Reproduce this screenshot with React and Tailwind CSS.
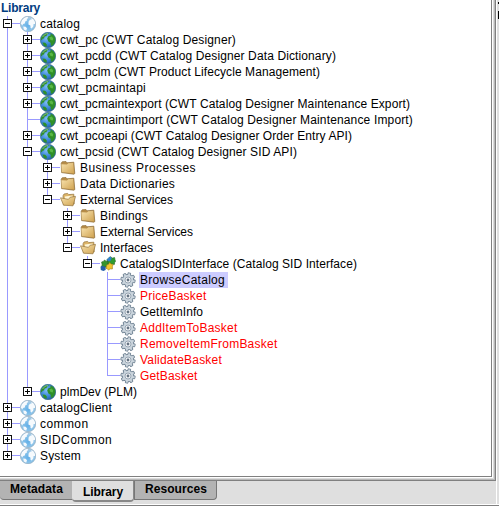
import { useLayoutEffect, useRef } from "react";

// g: one flag for each ancestor column, "1" where its line continues below
const ROWS = [
  { g: "", box: "-", icon: "pale", text: "catalog", w: 40 },
  { g: "1", box: "+", icon: "globe", text: "cwt_pc (CWT Catalog Designer)", w: 176 },
  { g: "1", box: "+", icon: "globe", text: "cwt_pcdd (CWT Catalog Designer Data Dictionary)", w: 276 },
  { g: "1", box: "+", icon: "globe", text: "cwt_pclm (CWT Product Lifecycle Management)", w: 260 },
  { g: "1", box: "+", icon: "globe", text: "cwt_pcmaintapi", w: 86 },
  { g: "1", box: "+", icon: "globe", text: "cwt_pcmaintexport (CWT Catalog Designer Maintenance Export)", w: 350 },
  { g: "1", box: "", icon: "globe", text: "cwt_pcmaintimport (CWT Catalog Designer Maintenance Import)", w: 353 },
  { g: "1", box: "+", icon: "globe", text: "cwt_pcoeapi (CWT Catalog Designer Order Entry API)", w: 292 },
  { g: "1", box: "-", icon: "globe", text: "cwt_pcsid (CWT Catalog Designer SID API)", w: 237 },
  { g: "11", box: "+", icon: "folder", text: "Business Processes", w: 116 },
  { g: "11", box: "+", icon: "folder", text: "Data Dictionaries", w: 95 },
  { g: "11", box: "-", icon: "open", text: "External Services", w: 93, last: true },
  { g: "110", box: "+", icon: "folder", text: "Bindings", w: 48 },
  { g: "110", box: "+", icon: "folder", text: "External Services", w: 93 },
  { g: "110", box: "-", icon: "open", text: "Interfaces", w: 53, last: true },
  { g: "1100", box: "-", icon: "puzzle", text: "CatalogSIDInterface (Catalog SID Interface)", w: 237, last: true },
  { g: "11000", box: "", icon: "gear", text: "BrowseCatalog", w: 85, selected: true },
  { g: "11000", box: "", icon: "gear", text: "PriceBasket", w: 66.5, red: true },
  { g: "11000", box: "", icon: "gear", text: "GetItemInfo", w: 63 },
  { g: "11000", box: "", icon: "gear", text: "AddItemToBasket", w: 97.5, red: true },
  { g: "11000", box: "", icon: "gear", text: "RemoveItemFromBasket", w: 137.5, red: true },
  { g: "11000", box: "", icon: "gear", text: "ValidateBasket", w: 82, red: true },
  { g: "11000", box: "", icon: "gear", text: "GetBasket", w: 57.5, red: true, last: true },
  { g: "1", box: "+", icon: "globe", text: "plmDev (PLM)", w: 77, last: true },
  { g: "", box: "+", icon: "pale", text: "catalogClient", w: 72 },
  { g: "", box: "+", icon: "pale", text: "common", w: 48.5 },
  { g: "", box: "+", icon: "pale", text: "SIDCommon", w: 72 },
  { g: "", box: "+", icon: "pale", text: "System", w: 41, last: true },
];

// Spreads the letters of a label over a given width
function Label({ text, width, className }) {
  const ref = useRef(null);
  useLayoutEffect(() => {
    const el = ref.current;
    el.style.letterSpacing = "0px";
    const natural = el.getBoundingClientRect().width;
    el.style.letterSpacing = `${(width - natural) / text.length}px`;
  }, [text, width]);
  return (
    <span ref={ref} className={className}>
      {text}
    </span>
  );
}

function Guide({ on }) {
  return (
    <div className="h-4 w-5 shrink-0 pl-[7px]">
      {on && <div className="h-4 w-px bg-[#9999ff]" />}
    </div>
  );
}

function Connector({ box, last }) {
  return (
    <svg width="20" height="16" shapeRendering="crispEdges" className="shrink-0">
      <path d={last ? "M7 0h1v8h-1z" : "M7 0h1v16h-1z"} fill="#9999ff" />
      <path d="M7 7h13v1h-13z" fill="#9999ff" />
      {box && (
        <>
          <rect x="3.5" y="3.5" width="8" height="8" fill="#fff" stroke="#111" />
          <path d="M5 7h5v1h-5z" fill="#000" />
          {box === "+" && <path d="M7 5h1v5h-1z" fill="#000" />}
        </>
      )}
    </svg>
  );
}

function Globe({ pale }) {
  return (
    <svg width="16" height="16" viewBox="0 0 16 16" className="shrink-0">
      <circle cx="8" cy="8" r="7.7" fill={pale ? "url(#paleSea)" : "url(#sea)"} stroke={pale ? "#86a3b8" : "#2a5f80"} strokeWidth=".6" />
      {pale ? (
        <g fill="#f6fafd">
          <path d="M.8 7.4 1.8 4.4 4.2 2 7.2.8 8.2 2 6.8 3 7 4.6 5.2 5.6 4.8 7.4 3 8 2.4 9.4z" />
          <path d="M8.6 5.6 10 3.8 11.6 3.4 11.4 2 13.6 3.4 15 6 15 8 13.6 8 13.4 10.2 11.8 12.4 10.6 12 10.4 9.4 8.4 8.6z" />
          <path d="M3.2 10.4 5.6 10.8 7 12.2 6.2 14.8 3.8 13.6z" />
        </g>
      ) : (
        <g fill="#2f8f28">
          <path d="M.8 7.6 1.6 4.6 4 2 7.4.7 9 1.8 7 2.6 6.6 4 4.6 4.4 4 6.4 2.4 6.8 2 8.6z" />
          <path d="M7.2 6.6 8.4 4.2 10.6 3.4 10.4 1.6 13.4 3 15.2 6 15.3 8.6 14.2 11.8 12.2 13.8 10.8 13.4 10.6 10.8 8.4 9.6z" />
          <path d="M2.4 10.6 5.2 10.8 6.8 12.4 6.6 14.8 4 14z" />
          <path d="M9.2 5.4 11.6 4.6 13.2 6.2 12.8 8.4 10.6 8z" fill="#58b844" />
        </g>
      )}
      <path d="M2.6 5C3.8 2.8 6 1.6 8 1.6" stroke="#fff" strokeOpacity=".4" fill="none" />
    </svg>
  );
}

function Folder({ open }) {
  return (
    <svg width="16" height="16" viewBox="0 0 16 16" className="shrink-0">
      {open ? (
        <>
          <path d="M3.4 12.8 3 3.8 4 2 7.6 1.4 8.8 2.6 13.8 2.2 14.2 12z" fill="#dcb468" stroke="#94743e" strokeWidth=".7" />
          <path d="M4.8 4.4 12.6 3.4 12.8 8 5 9z" fill="#fff6d6" />
          <path d="M.5 5.8 8.4 7.4 10.2 5.2 15.5 4.4 13 13.8 3.6 13.2z" fill="url(#fold)" stroke="#94743e" strokeWidth=".7" />
        </>
      ) : (
        <>
          <path d="M1.2 3.2 2.2 1.8 6 1.6 7.2 2.8 13.8 2.2 14.8 13.6 13.8 14.2 1.6 12.6z" fill="#b78d48" stroke="#8c6c37" strokeWidth=".7" />
          <path d="M1.4 4.2 7 4.4 8.2 3.2 13.2 2.9 14 13.4 1.8 12.1z" fill="url(#fold)" />
        </>
      )}
    </svg>
  );
}

function Gear() {
  return (
    <svg width="16" height="16" viewBox="0 0 16 16" className="shrink-0">
      <g fill="#6c7f90">
        {[0, 45, 90, 135].map((a) => (
          <rect key={a} x="6.2" y=".4" width="3.6" height="15.2" rx="1" transform={`rotate(${a + 12} 8 8)`} />
        ))}
      </g>
      <circle cx="8" cy="8" r="5.9" fill="#6c7f90" />
      <g fill="#cbd5dd">
        {[0, 45, 90, 135].map((a) => (
          <rect key={a} x="7" y="1.2" width="2" height="13.6" transform={`rotate(${a + 12} 8 8)`} />
        ))}
      </g>
      <circle cx="8" cy="8" r="5.2" fill="#cbd5dd" />
      <circle cx="8" cy="8" r="3" fill="#f4f6f8" stroke="#8796a4" strokeWidth=".8" />
      <circle cx="8" cy="8" r="1.4" fill="#647382" />
    </svg>
  );
}

function Puzzle() {
  return (
    <svg width="16" height="16" viewBox="0 0 16 16" className="shrink-0">
      <path d="M7 3.2 9 2.8 9 1.4 11 .8 11.8 2.2 14.6 1.6 15 4 15.6 5.2 14.6 6.6 14.4 8.4 11.8 8 10.6 9 9 8 7.4 8z" fill="#2f9c30" stroke="#1e5f22" strokeWidth=".6" />
      <path d="M6.8 3 8.6 2.6 8.8 1.2 10.8.8 11.6 2.6 10.4 5 8 5.4z" fill="#2f7fd0" />
      <path d="M1.6 6 3.4 5.4 4.6 4 6 5.2 8.2 5.4 7.8 8 9 9.2 7.2 11.2 4.6 11 3 12 1.2 10.8 2.2 9z" fill="#35942c" stroke="#225f20" strokeWidth=".6" />
      <path d="M6.6 9 8.4 8.4 9.6 6.6 11.2 8 13.2 8.4 12.4 10.6 12.4 13 10 12.8 8.6 14.2 7.4 12.8 6 12.4z" fill="#f0c52c" stroke="#9a7917" strokeWidth=".6" />
      <path d="M.5 10.8 2.6 9.8 5.6 11 5.6 14 3.4 15 .8 14z" fill="#245fa8" />
    </svg>
  );
}

function Icon({ kind }) {
  if (kind === "globe") return <Globe />;
  if (kind === "pale") return <Globe pale />;
  if (kind === "folder") return <Folder />;
  if (kind === "open") return <Folder open />;
  if (kind === "puzzle") return <Puzzle />;
  return <Gear />;
}

function Row({ row }) {
  return (
    <div className="flex h-4 items-center whitespace-nowrap">
      {row.g.split("").map((f, i) => (
        <Guide key={i} on={f === "1"} />
      ))}
      <Connector box={row.box} last={row.last} />
      <Icon kind={row.icon} />
      <div className={`ml-[3px] h-4 pr-[3px] pl-px leading-4 ${row.selected ? "bg-[#ccccff]" : ""} ${row.red ? "text-[#f00]" : "text-black"}`}>
        <Label text={row.text} width={row.w} />
      </div>
    </div>
  );
}

export default function App() {
  return (
    <div className="flex h-[506px] w-[499px] flex-col overflow-hidden bg-[#dfdfdf] font-['Liberation_Sans',Arial,sans-serif] text-[12px]">
      <svg width="0" height="0" className="absolute">
        <defs>
          <radialGradient id="sea" cx=".4" cy=".4" r=".7">
            <stop offset="0" stopColor="#7dbcf5" />
            <stop offset=".55" stopColor="#3a86d8" />
            <stop offset="1" stopColor="#1c5494" />
          </radialGradient>
          <radialGradient id="paleSea" cx=".5" cy=".6" r=".6">
            <stop offset="0" stopColor="#62b0e8" />
            <stop offset=".6" stopColor="#8cc4ea" />
            <stop offset="1" stopColor="#b4cde0" />
          </radialGradient>
          <linearGradient id="fold" x1="0" y1="0" x2="1" y2="1">
            <stop offset="0" stopColor="#f8e3ae" />
            <stop offset="1" stopColor="#d0a352" />
          </linearGradient>
        </defs>
      </svg>
      <div className="flex h-[504px]">
        <div className="flex w-[496px] flex-col">
          <div className="h-[481px] border-r border-b border-[#808080] bg-[#b8b8b8] pr-px pb-px">
            <div className="h-full border-r border-b border-[#dadada] bg-white pr-px pb-px">
              <div className="h-[477px] w-[492px] border-r border-b border-[#808080] bg-white">
                <div className="h-4 pl-px leading-4 font-bold text-[#003c80]">
                  <Label text="Library" width={39} />
                </div>
                {ROWS.map((r, i) => (
                  <Row key={i} row={r} />
                ))}
              </div>
            </div>
          </div>
          <div className="flex items-start font-bold text-black">
            <div className="h-[19px] w-[72px] rounded-bl-sm border-b border-[#777] bg-[#b3b3b3] pl-[10px] leading-[17px]">
              <Label text="Metadata" width={53} />
            </div>
            <div className="h-[21px] w-[62px] rounded-b-sm border-r border-b-2 border-[#888] bg-[#dfdfdf] pl-[11px] leading-[22px]">
              <Label text="Library" width={40} />
            </div>
            <div className="h-[19px] w-[83px] rounded-br-sm border-r border-b border-l border-[#777] bg-[#b3b3b3] pl-[10px] leading-[17px]">
              <Label text="Resources" width={62} />
            </div>
          </div>
        </div>
        <div className="w-px bg-white" />
        <div className="flex-1 bg-[#dfdfdf]">
          <div className="mt-[2px] ml-px h-[2px] bg-black" />
          <div className="mt-[7px] ml-px h-2 bg-black" />
        </div>
      </div>
      <div className="h-px bg-white" />
      <div className="h-px bg-[#808080]" />
    </div>
  );
}
